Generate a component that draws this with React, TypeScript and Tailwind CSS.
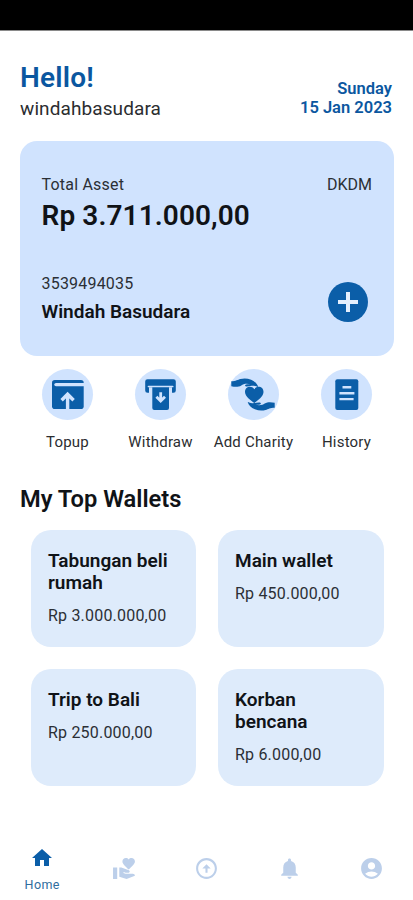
import type { ReactNode } from 'react'
import { MdAccountCircle, MdArrowCircleUp, MdHome, MdNotifications, MdVolunteerActivism } from 'react-icons/md'

const WALLETS = [
  { name: 'Tabungan beli rumah', amount: 'Rp 3.000.000,00' },
  { name: 'Main wallet', amount: 'Rp 450.000,00' },
  { name: 'Trip to Bali', amount: 'Rp 250.000,00' },
  { name: 'Korban bencana', amount: 'Rp 6.000,00' },
]

const ACTIONS = [
  { label: 'Topup', icon: <TopupIcon /> },
  { label: 'Withdraw', icon: <WithdrawIcon /> },
  { label: 'Add Charity', icon: <CharityIcon /> },
  { label: 'History', icon: <HistoryIcon /> },
]

const NAV = [MdVolunteerActivism, MdArrowCircleUp, MdNotifications, MdAccountCircle]

export default function App() {
  return (
    <div className="flex h-[900px] w-full flex-col overflow-hidden bg-white font-['Roboto',sans-serif] text-[#101317]">
      <div className="h-[30px] shrink-0 bg-black" />

      <header className="flex h-[111px] shrink-0 items-end justify-between border-t border-[#8a8a8a] pl-5 pr-[21px] pb-[18px]">
        <div>
          <h1 className="text-[28px] font-semibold leading-[33px] tracking-[0.2px] text-[#0b57a0]">Hello!</h1>
          <p className="text-[19px] leading-[29px] tracking-[0.1px] text-[#2b2d30]">windahbasudara</p>
        </div>
        <div className="pb-[6px] text-right text-[16.500px] font-semibold leading-[19px] text-[#0b57a0]">
          <p>Sunday</p>
          <p>15 Jan 2023</p>
        </div>
      </header>

      <AssetCard />

      <div className="mx-5 mt-[13px] grid shrink-0 grid-cols-4 pl-px">
        {ACTIONS.map((a) => (
          <button key={a.label} className="flex flex-col items-center">
            <span className="block h-[51px] w-[51px] rounded-full bg-[#d0e3fe] text-[#0b5ea8]">{a.icon}</span>
            <span className="mt-[11px] whitespace-nowrap text-[15px] leading-[22px] tracking-[0.2px] text-[#2b2d30]">{a.label}</span>
          </button>
        ))}
      </div>

      <h2 className="mt-[31px] shrink-0 pl-5 text-[23.700px] font-semibold leading-[30px]">My Top Wallets</h2>

      <div className="ml-[31px] mt-4 grid shrink-0 grid-cols-[165px_166px] gap-x-[22px] gap-y-[22px]">
        {WALLETS.map((w) => (
          <div key={w.name} className="h-[117px] rounded-[20px] bg-[#deebfb] pl-[17px] pr-4 pt-5">
            <h3 className="text-[19px] font-semibold leading-[22px]">{w.name}</h3>
            <p className="mt-[10px] whitespace-nowrap text-[16px] leading-[24px] tracking-[0.2px] text-[#2b2f35]">{w.amount}</p>
          </div>
        ))}
      </div>

      <nav className="mt-auto grid h-[64px] shrink-0 grid-cols-5 pl-px">
        <button className="flex flex-col items-center pt-[10px] text-[#0b5ea8]">
          <MdHome size={24} />
          <span className="mt-[6px] text-[12.500px] leading-[18px] tracking-[0.4px] text-[#2f6d9e]">Home</span>
        </button>
        {NAV.map((Icon, i) => (
          <button key={i} className="flex justify-center pt-5 text-[#bccfea]">
            <Icon size={25} />
          </button>
        ))}
      </nav>
    </div>
  )
}

function AssetCard() {
  return (
    <section className="ml-5 mr-[19px] flex h-[215px] shrink-0 flex-col justify-between rounded-[17px] bg-[#d0e3fe] pb-[31px] pl-[21.500px] pr-[22px] pt-[33px]">
      <div>
        <div className="flex justify-between text-[16px] leading-[22px] text-[#2b2f35]">
          <span className="tracking-[0.2px]">Total Asset</span>
          <span>DKDM</span>
        </div>
        <p className="mt-[3px] text-[28px] font-semibold leading-[33px] tracking-[0.1px]">Rp 3.711.000,00</p>
      </div>
      <div className="flex items-end justify-between">
        <div>
          <p className="text-[16px] leading-[24px] tracking-[0.2px] text-[#2b2f35]">3539494035</p>
          <p className="mt-[3px] text-[19px] font-semibold leading-[26px]">Windah Basudara</p>
        </div>
        <button className="mb-[3px] mr-[4px] flex h-10 w-10 items-center justify-center rounded-full bg-[#0b5ea8]" aria-label="Add">
          <Svg size={20}>
            <path d="M10 0v20M0 10h20" stroke="#e4effd" strokeWidth="4" />
          </Svg>
        </button>
      </div>
    </section>
  )
}

function Svg({ size = 51, children }: { size?: number; children: ReactNode }) {
  return (
    <svg width={size} height={size} viewBox={`0 0 ${size} ${size}`} fill="none">
      {children}
    </svg>
  )
}

function TopupIcon() {
  return (
    <Svg>
      <rect x="10" y="11" width="31.7" height="29" rx="2.8" fill="currentColor" />
      <path d="M14 15.600h27.700" stroke="#d0e3fe" strokeWidth="3.400" strokeLinecap="round" />
      <path d="M25.600 40V27M19.600 31.200l6-6 6 6" stroke="#d0e3fe" strokeWidth="3.400" />
    </Svg>
  )
}

function WithdrawIcon() {
  return (
    <Svg>
      <path d="M12.500 10.300h26a2.300 2.300 0 0 1 2.300 2.300v8.800a2.300 2.300 0 0 1-2.300 2.300h-1.500v-5.400h-23v5.400h-1.500a2.300 2.300 0 0 1-2.300-2.300v-8.800a2.300 2.300 0 0 1 2.300-2.300z" fill="currentColor" />
      <path d="M17.300 18H34v21a2 2 0 0 1-2 2H19.300a2 2 0 0 1-2-2z" fill="currentColor" />
      <path d="M13.500 17.500h24.200" stroke="#d0e3fe" strokeWidth="1.700" strokeLinecap="round" />
      <path d="M25.700 23.300v8M21.400 27.800l4.300 4.300 4.300-4.300" stroke="#d0e3fe" strokeWidth="2.800" />
    </Svg>
  )
}

const HAND =
  'M46.700 33.700c-2.600-.5-5-.7-7.400-.3-2 .4-3.300 1.800-4.900 2.400-2.200.7-4.600.6-6.800 0 2-.1 4.300.1 5.200-.8.4-.9-.5-1.500-1.700-1.500-2.500 0-4.700.9-7 .7-1.800-.2-3-1-4.400-1.300.8 3 3.400 5.800 7.200 7.400 3.500 1.400 7.200 1.600 10.700.7 2.700-.7 4.400-2.200 9.100-2.200z'

function CharityIcon() {
  return (
    <Svg>
      <path d={HAND} fill="currentColor" />
      <path d={HAND} fill="currentColor" transform="rotate(180 25 25.500)" />
      <path d="M26.300 34c-3.500-2.700-9.300-6.600-9.300-11 0-5.300 6.300-7 9.300-2.700 3-4.300 9.200-2.600 9.200 2.700 0 4.400-5.700 8.300-9.200 11z" fill="currentColor" />
    </Svg>
  )
}

function HistoryIcon() {
  return (
    <Svg>
      <rect x="14.300" y="10.300" width="23" height="30.700" rx="2" fill="currentColor" />
      <path d="M21.500 18.300h8.800M18.400 24.200h15M18.400 30.100h14.200" stroke="#d0e3fe" strokeWidth="2.400" />
    </Svg>
  )
}
